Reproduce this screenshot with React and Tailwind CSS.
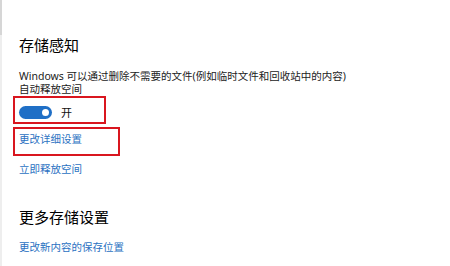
export default function App() {
  const font = { fontFamily: '"Noto Sans", "Noto Sans CJK SC", sans-serif' };
  return (
    <div className="w-[450px] h-[266px] bg-white flex overflow-hidden" style={font}>
      <div className="w-[2px] flex flex-col">
        <div className="h-[35px] bg-[#d6d6d6]" />
        <div className="flex-1 bg-[#eeeeee]" />
      </div>
      <div className="pl-[17px] pt-[35px] flex flex-col text-[#1a1a1a]">
        <div className="text-[15px] leading-[20px] text-black">存储感知</div>
        <div className="mt-[15px] text-[10.5px] leading-[13px] text-[#222]">
          <div>Windows 可以通过删除不需要的文件(例如临时文件和回收站中的内容)</div>
          <div>自动释放空间</div>
        </div>
        <div className="-ml-[6px] w-[93px] h-[28px] border-2 border-[#d9161f] pl-[4px] pt-[8px] flex items-start">
          <div className="w-[33px] h-[13px] rounded-full bg-[#1f6fc6] flex items-center justify-end pr-[3px]">
            <div className="w-[7px] h-[7px] rounded-full bg-white" />
          </div>
          <div className="ml-[9px] text-[11px] leading-[13px] text-[#111]">开</div>
        </div>
        <div className="-ml-[6px] mt-[3px] w-[107px] h-[29px] border-2 border-[#d9161f] pl-[4px] pt-[4px]">
          <div className="text-[10.5px] leading-[13px] text-[#2b72c2]">更改详细设置</div>
        </div>
        <div className="mt-[7px] text-[10.5px] leading-[13px] text-[#2b72c2]">立即释放空间</div>
        <div className="mt-[31px] text-[15px] leading-[20px] text-black">更多存储设置</div>
        <div className="mt-[14px] text-[10.5px] leading-[13px] text-[#2b72c2]">更改新内容的保存位置</div>
      </div>
    </div>
  );
}
